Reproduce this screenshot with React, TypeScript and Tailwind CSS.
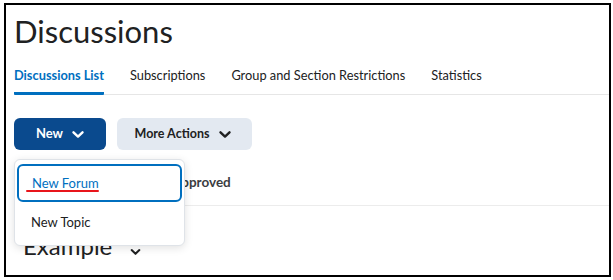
import React from 'react'

const FONT = "font-['Lato','Noto_Sans',sans-serif]"

function Chevron({ className }: { className: string }) {
  return (
    <svg viewBox="0 0 12 7" className={className} fill="none" stroke="currentColor" strokeWidth="2.4" strokeLinecap="round" strokeLinejoin="round">
      <path d="M1.5 1.3L6 5.6l4.5-4.3" />
    </svg>
  )
}

const TABS = ['Discussions List', 'Subscriptions', 'Group and Section Restrictions', 'Statistics']

export default function App() {
  return (
    <div className={`w-[613px] h-[280px] bg-white pl-[4px] pt-[3px] ${FONT}`}>
      <div className="relative w-[607px] h-[274px] border-2 border-black overflow-hidden">
        <div className="pl-[8px]">
          <h1 className="mt-[7px] text-[31px] leading-[38px] text-[#202122]">Discussions</h1>

          <div className="mt-[17px] flex gap-[26px] border-b border-[#e6e6e6]">
            {TABS.map((t, i) => (
              <div
                key={t}
                className={
                  i === 0
                    ? 'pb-[8px] text-[12.8px] leading-[16px] font-bold text-[#006fbf] border-b-[3px] border-[#006fbf] rounded-[1px] -mb-px'
                    : 'pb-[11px] text-[12.8px] leading-[16px] text-[#202122]'
                }
              >
                {t}
              </div>
            ))}
          </div>

          <div className="mt-[23px] flex gap-[11px]">
            <button className="w-[92px] h-[32px] rounded-[6px] bg-[#0a4a8e] text-white text-[13px] font-bold flex items-center justify-center gap-[9px]">
              New
              <Chevron className="w-[12px] h-[7px]" />
            </button>
            <button className="w-[135px] h-[32px] rounded-[6px] bg-[#e3e9f1] text-[#202122] text-[12.5px] font-bold flex items-center justify-center gap-[10px] pr-[3px]">
              More Actions
              <Chevron className="w-[12px] h-[7px]" />
            </button>
          </div>

          <div className="mt-[22px] h-[33px] pl-[143px] text-[13.5px] font-bold text-[#3b3d3f] leading-[20px]">
            Unapproved
          </div>
          <div className="border-b border-[#ececec]" />

          <div className="mt-[25px] pl-[9px] flex items-start gap-[18px]">
            <span className="text-[24px] leading-[30px] text-[#202122]">Example</span>
            <Chevron className="mt-[18px] w-[11px] h-[6px] text-[#202122]" />
          </div>
        </div>

        <div className="absolute left-[8px] top-[154px] w-[171px] h-[87px] bg-white border border-[#dfe3e8] rounded-[6px] shadow-[0_2px_8px_rgba(0,0,0,0.12)] p-[1px]">
          <div className="relative h-[38px] mt-[3px] mx-px rounded-[6px] border-2 border-[#006fbf] flex items-center pl-[13px]">
            <span className="text-[13px] text-[#006fbf] leading-[18px]">New Forum</span>
            <div className="absolute left-[7px] top-[24px] w-[73px] h-[2px] bg-[#e8151b] rounded-full" />
          </div>
          <div className="h-[40px] flex items-center pl-[15px]">
            <span className="text-[13px] text-[#202122] leading-[18px]">New Topic</span>
          </div>
        </div>
      </div>
    </div>
  )
}
